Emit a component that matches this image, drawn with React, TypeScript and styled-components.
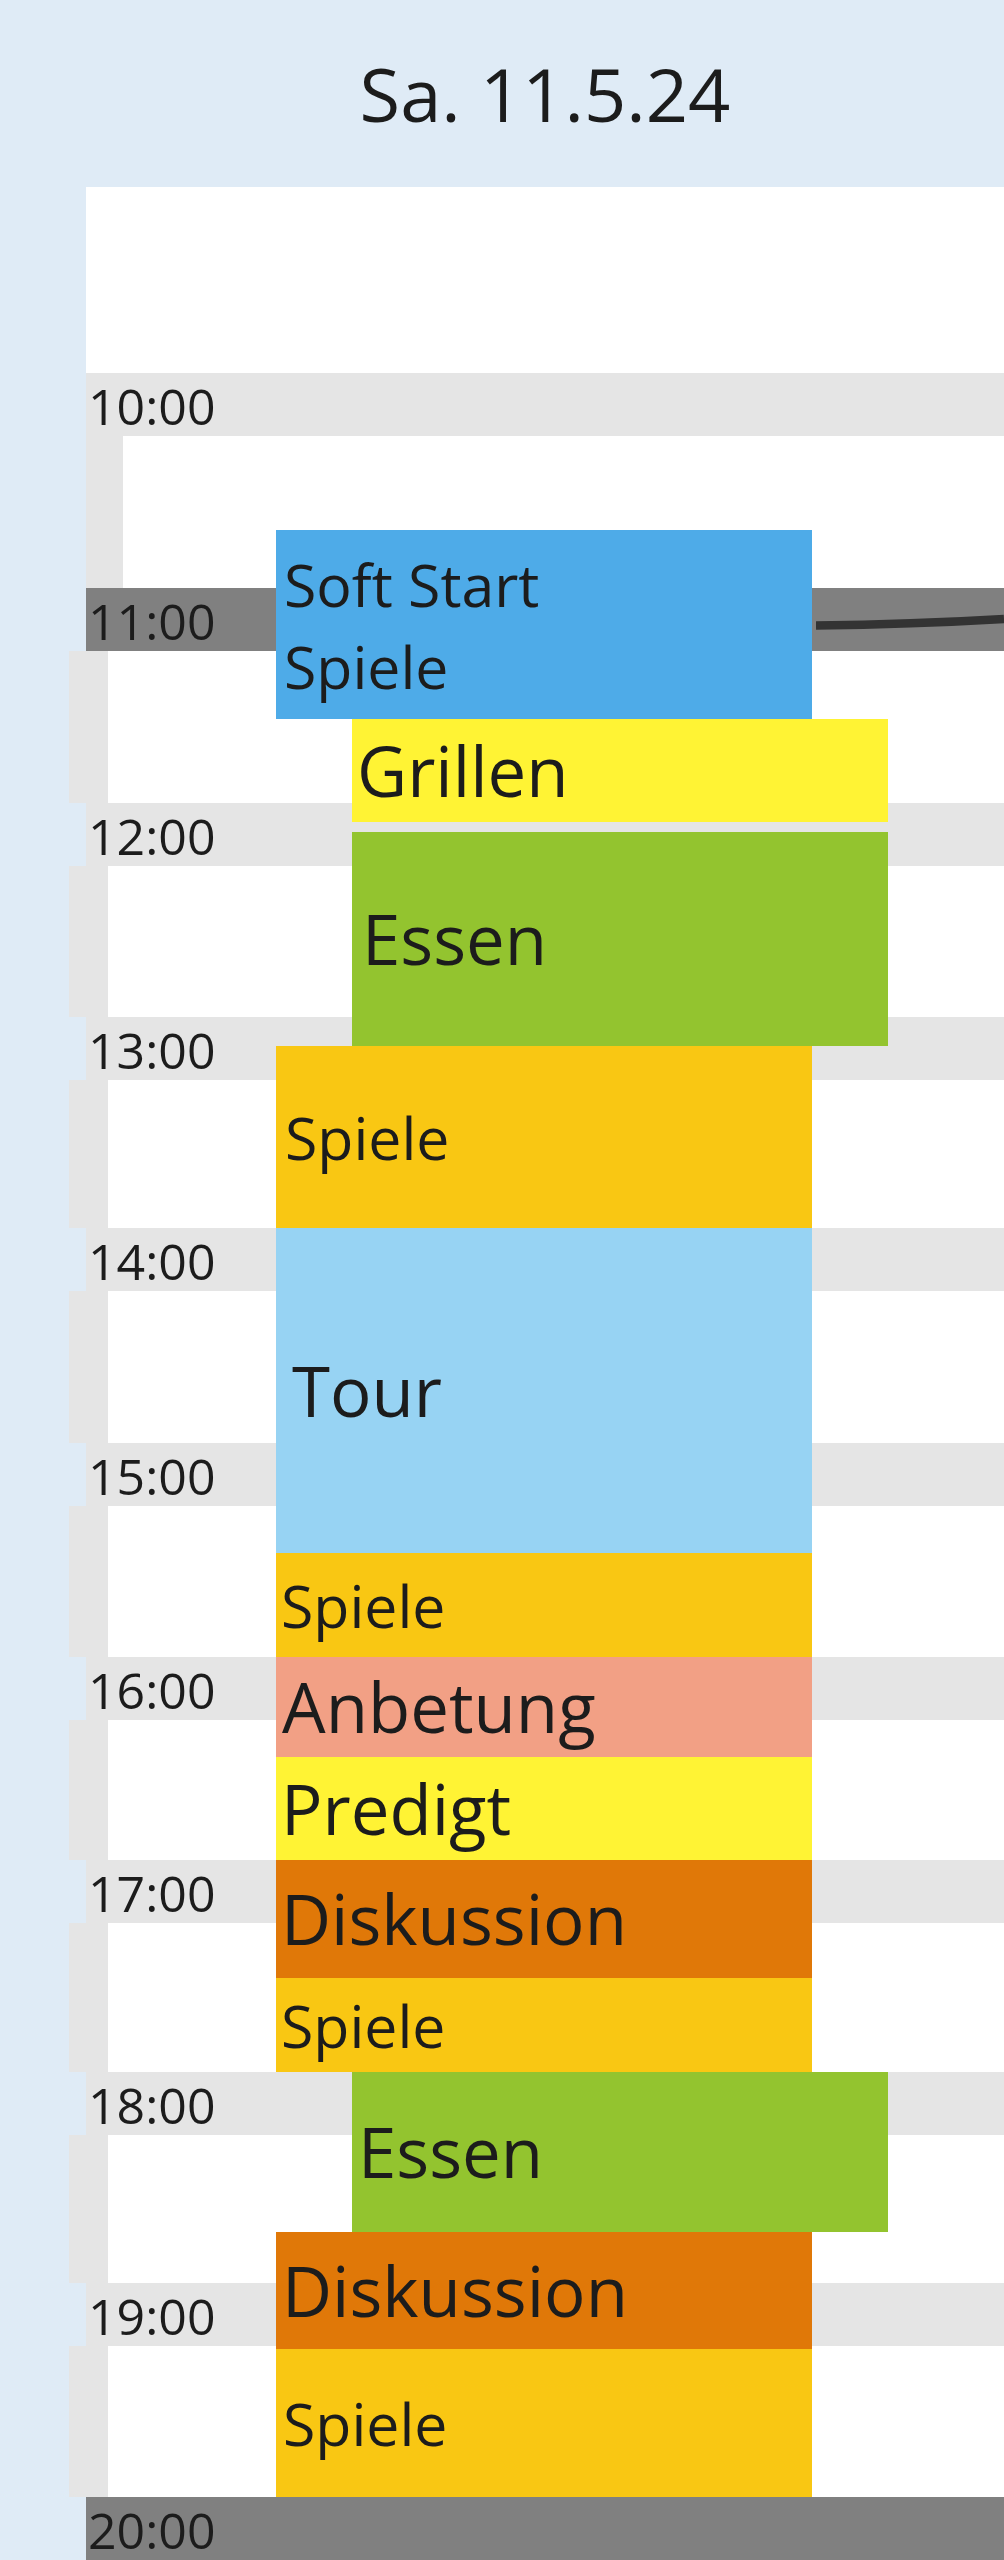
import React from 'react';
import styled, { createGlobalStyle } from 'styled-components';

const Global = createGlobalStyle`
  html, body { margin: 0; padding: 0; }
  body {
    background: #dfebf6;
    font-family: "Open Sans", "Noto Sans", sans-serif;
    color: #1c1c1c;
    overflow: hidden;
  }
`;

const Page = styled.div`
  display: flex;
  flex-direction: column;
  padding-left: 86px;
  min-height: 2560px;
`;

const Header = styled.header`
  height: 187px;
  display: flex;
  align-items: center;
  justify-content: center;
  font-size: 74px;
  font-weight: 400;
`;

const Panel = styled.main`
  background: #ffffff;
  display: grid;
  flex: 1;
`;

const HourGrid = styled.div`
  grid-area: 1 / 1;
  display: flex;
  flex-direction: column;
  padding-top: 186px;
`;

const Band = styled.div<{ $current?: boolean }>`
  position: relative;
  height: 63px;
  flex: none;
  background: ${(p) => (p.$current ? '#808080' : '#e5e5e5')};
  display: flex;
  align-items: center;
  padding-left: 2px;
  padding-top: 2px;
  box-sizing: border-box;
  font-size: 50px;
  line-height: 1;
`;

const HourBody = styled.div<{ $h: number }>`
  height: ${(p) => p.$h}px;
  flex: none;
  display: flex;
`;

const Strip = styled.div<{ $first?: boolean }>`
  width: ${(p) => (p.$first ? 37 : 39)}px;
  margin-left: ${(p) => (p.$first ? 0 : -17)}px;
  background: #e5e5e5;
`;

const NowLine = styled.svg`
  position: absolute;
  left: 730px;
  top: 0;
  width: 188px;
  height: 63px;
`;

const EventColumn = styled.div`
  grid-area: 1 / 1;
  position: relative;
  z-index: 1;
  display: flex;
  flex-direction: column;
  align-items: flex-start;
  padding-top: 343px;
`;

const Event = styled.div<{
  $bg: string;
  $h: number;
  $indent?: boolean;
  $small?: boolean;
  $pad: number;
  $after?: number;
}>`
  box-sizing: border-box;
  width: 536px;
  height: ${(p) => p.$h}px;
  flex: none;
  margin-left: ${(p) => (p.$indent ? 266 : 190)}px;
  margin-bottom: ${(p) => p.$after ?? 0}px;
  background: ${(p) => p.$bg};
  display: flex;
  flex-direction: column;
  justify-content: center;
  padding-left: ${(p) => p.$pad}px;
  font-size: ${(p) => (p.$small ? 59 : 69)}px;
  line-height: 1.39;
  white-space: nowrap;
`;

type Hour = { label: string; body: number; current?: boolean };

const hours: Hour[] = [
  { label: '10:00', body: 152 },
  { label: '11:00', body: 152, current: true },
  { label: '12:00', body: 151 },
  { label: '13:00', body: 148 },
  { label: '14:00', body: 152 },
  { label: '15:00', body: 151 },
  { label: '16:00', body: 140 },
  { label: '17:00', body: 149 },
  { label: '18:00', body: 148 },
  { label: '19:00', body: 151 },
  { label: '20:00', body: 0, current: true },
];

type Ev = {
  lines: string[];
  bg: string;
  h: number;
  indent?: boolean;
  small?: boolean;
  pad: number;
  after?: number;
};

const C = {
  blue: '#4eabe8',
  yellow: '#fff334',
  green: '#93c42f',
  amber: '#f9c713',
  sky: '#97d3f3',
  salmon: '#f2a085',
  orange: '#e07808',
};

const events: Ev[] = [
  { lines: ['Soft Start', 'Spiele'], bg: C.blue, h: 189, small: true, pad: 8 },
  { lines: ['Grillen'], bg: C.yellow, h: 103, indent: true, pad: 5, after: 10 },
  { lines: ['Essen'], bg: C.green, h: 214, indent: true, pad: 10 },
  { lines: ['Spiele'], bg: C.amber, h: 182, small: true, pad: 9 },
  { lines: ['Tour'], bg: C.sky, h: 325, pad: 16 },
  { lines: ['Spiele'], bg: C.amber, h: 104, small: true, pad: 5 },
  { lines: ['Anbetung'], bg: C.salmon, h: 100, pad: 6 },
  { lines: ['Predigt'], bg: C.yellow, h: 103, pad: 5 },
  { lines: ['Diskussion'], bg: C.orange, h: 118, pad: 5 },
  { lines: ['Spiele'], bg: C.amber, h: 94, small: true, pad: 5 },
  { lines: ['Essen'], bg: C.green, h: 160, indent: true, pad: 6 },
  { lines: ['Diskussion'], bg: C.orange, h: 117, pad: 6 },
  { lines: ['Spiele'], bg: C.amber, h: 148, small: true, pad: 7 },
];

export default function App() {
  return (
    <>
      <Global />
      <Page>
        <Header>Sa. 11.5.24</Header>
        <Panel>
          <HourGrid>
            {hours.map((h, i) => (
              <React.Fragment key={h.label}>
                <Band $current={h.current}>
                  {h.label}
                  {i === 1 && (
                    <NowLine viewBox="0 0 188 63" preserveAspectRatio="none">
                      <path
                        d="M0 37.5 Q 95 36.5 188 31"
                        fill="none"
                        stroke="#333333"
                        strokeWidth="8.5"
                      />
                    </NowLine>
                  )}
                </Band>
                {h.body > 0 && (
                  <HourBody $h={h.body}>
                    <Strip $first={i === 0} />
                  </HourBody>
                )}
              </React.Fragment>
            ))}
          </HourGrid>
          <EventColumn>
            {events.map((e, i) => (
              <Event
                key={i}
                $bg={e.bg}
                $h={e.h}
                $indent={e.indent}
                $small={e.small}
                $pad={e.pad}
                $after={e.after}
              >
                {e.lines.map((l) => (
                  <span key={l}>{l}</span>
                ))}
              </Event>
            ))}
          </EventColumn>
        </Panel>
      </Page>
    </>
  );
}
